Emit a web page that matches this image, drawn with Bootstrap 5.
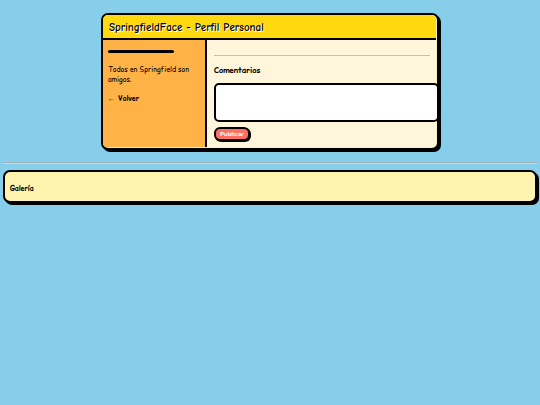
<!DOCTYPE html>
<html lang="es">
<head>
<meta charset="utf-8">
<meta name="viewport" content="width=device-width, initial-scale=1">
<title>SpringfieldFace - Perfil Personal</title>
<link href="https://cdn.jsdelivr.net/npm/bootstrap@5.3.0/dist/css/bootstrap.min.css" rel="stylesheet">
<style>
body { background: #87ceeb; color: #000; font-family: "Comic Relief", "Comic Neue", "Comic Sans MS", cursive; font-size: 7px; line-height: 10px; padding: 13px 3px; }
.toon { border: 2px solid #000; border-radius: 7px; box-shadow: 2px 2px 0 #000; }
.profile { max-width: 338px; background: #fff3b0; padding: 0 1px 1px 0; }
.profile-head { background: #ffd90f; border-bottom: 2px solid #000; border-radius: 5px 5px 0 0; padding: 6px 6px 4px; }
.profile-head h1 { font-family: "Comic Neue", "Comic Sans MS", cursive; font-size: 11px; line-height: 13px; font-weight: 700; text-shadow: 1px 1px 0 #fff; }
.profile-side { flex: 0 0 104px; background: #ffb347; border-right: 2px solid #000; border-radius: 0 0 0 4px; padding: 10px 5px; }
.avatar-line { width: 66px; height: 3px; background: #000; border-radius: 2px; }
.bio { margin: 12px 0 9px; }
.profile-side a { color: #000; font-weight: 700; text-decoration: none; }
.profile-main { background: #fff6dc; padding: 15px 6px 6px 7px; min-width: 0; border-radius: 0 0 4px 0; }
.rule { border-top: 1px solid #aaa; opacity: .7; margin: 0; }
.page-rule { border-top-color: #a4b2b8; border-bottom: 1px solid #b4dcec; opacity: 1; margin: 12px 0 6px; }
.profile-main label { font-size: 8px; font-weight: 700; margin: 10px 0 7px; }
.comment-box { display: block; width: calc(100% + 9px); height: 39px; background: #fff; border: 2px solid #000; border-radius: 5px; resize: none; padding: 3px; }
.publish { background: #ff6f61; color: #fff; border: 2px solid #000; border-radius: 6px; box-shadow: 1px 1px 0 #000; font: 700 6px/10px "Liberation Sans", Arial, sans-serif; padding: 0 4px; margin-top: 5px; }
.gallery { background: #fff3b0; padding: 12px 5px 7px; }
.gallery h2 { font-size: 7px; line-height: 10px; font-weight: 700; }
</style>
</head>
<body>
<main class="profile toon mx-auto">
  <header class="profile-head"><h1 class="m-0">SpringfieldFace - Perfil Personal</h1></header>
  <div class="d-flex">
    <aside class="profile-side">
      <div class="avatar-line"></div>
      <p class="bio">Todos en Springfield son amigos.</p>
      <a class="d-inline-block" href="#">← Volver</a>
    </aside>
    <section class="profile-main flex-grow-1">
      <hr class="rule">
      <label class="d-block" for="comment">Comentarios</label>
      <textarea class="comment-box" id="comment"></textarea>
      <button class="publish d-block" type="button">Publicar</button>
    </section>
  </div>
</main>
<hr class="rule page-rule">
<section class="gallery toon"><h2 class="m-0">Galería</h2></section>
<script src="https://cdn.jsdelivr.net/npm/bootstrap@5.3.0/dist/js/bootstrap.bundle.min.js"></script>
</body>
</html>
